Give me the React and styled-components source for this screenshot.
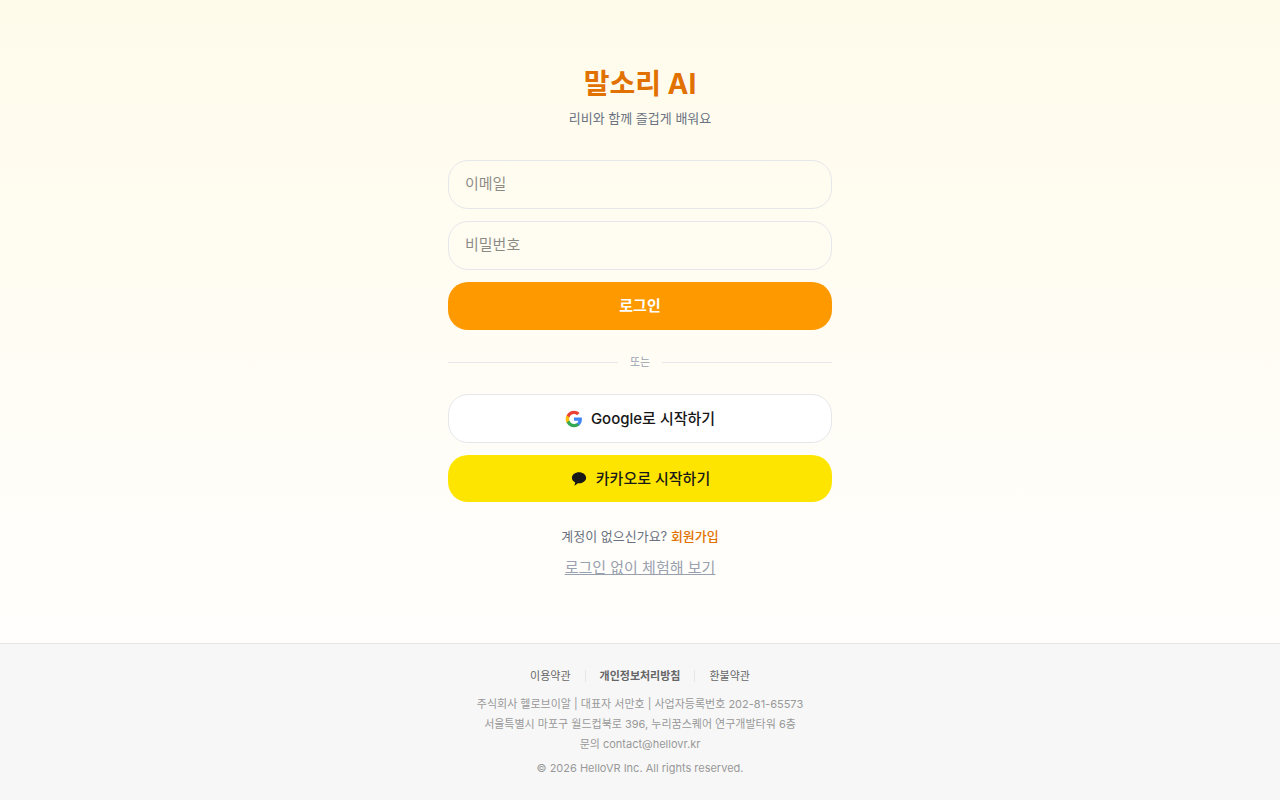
import React from "react";
import styled, { createGlobalStyle } from "styled-components";

const GlobalStyle = createGlobalStyle`
  * { box-sizing: border-box; }
  body {
    margin: 0;
    font-family: Inter, "Noto Sans CJK KR", sans-serif;
    font-size: 15px;
    line-height: 24px;
    color: #171717;
    background: #fffefa;
  }
  button, input { font: inherit; color: inherit; }
  h1, p { margin: 0; }
`;

const Page = styled.div`
  min-height: 100vh;
  display: flex;
  flex-direction: column;
`;

const Main = styled.main`
  flex: 1;
  display: flex;
  flex-direction: column;
  align-items: center;
  padding: 60px 24px;
  background: linear-gradient(to bottom, #fffbeb, #fffefc);
`;

const Panel = styled.div`
  width: 100%;
  max-width: 384px;
`;

const Header = styled.header`
  text-align: center;
  margin-bottom: 32px;
`;

const Title = styled.h1`
  font-size: 28px;
  line-height: 48px;
  font-weight: 700;
  color: #e17100;
`;

const Subtitle = styled.p`
  font-size: 13px;
  line-height: 20px;
  color: #6a7282;
`;

const Stack = styled.form`
  display: flex;
  flex-direction: column;
  gap: 12px;
`;

const Field = styled.input`
  width: 100%;
  height: 49px;
  padding: 0 16px 2px;
  border: 1px solid #e5e7eb;
  border-radius: 20px;
  background: transparent;
  &::placeholder { color: #171717; opacity: 0.5; }
`;

const tones = {
  primary: "height: 48px; border: 0; background: #fe9a00; color: #fff; font-weight: 700;",
  google: "height: 49px; border: 1px solid #e5e7eb; background: #fff; color: #171717;",
  kakao: "height: 47px; border: 0; background: #fee500; color: #191919;",
};

const Button = styled.button`
  display: flex;
  align-items: center;
  justify-content: center;
  gap: 8px;
  width: 100%;
  padding: 0 16px;
  border-radius: 20px;
  font-weight: 500;
  cursor: pointer;
  ${({ $tone }) => tones[$tone]}
`;

const Divider = styled.div`
  display: flex;
  align-items: center;
  gap: 12px;
  margin: 24px 0;
  font-size: 11px;
  line-height: 16px;
  color: #99a1af;
  &::before, &::after {
    content: "";
    flex: 1;
    height: 1px;
    background: #e5e7eb;
  }
`;

const Signup = styled.p`
  margin-top: 24px;
  text-align: center;
  font-size: 13px;
  line-height: 20px;
  color: #6a7282;
`;

const SignupLink = styled.a`
  font-weight: 500;
  color: #e17100;
  text-decoration: none;
`;

const Trial = styled.p`
  margin-top: 10px;
  text-align: center;
`;

const TrialLink = styled.a`
  color: #99a1af;
`;

const Footer = styled.footer`
  padding: 22px 24px;
  border-top: 1px solid #e5e5e5;
  background: #f7f7f7;
  text-align: center;
  font-size: 11px;
  line-height: 20px;
  color: #999;
`;

const Policies = styled.nav`
  display: flex;
  align-items: center;
  justify-content: center;
  gap: 14px;
  margin-bottom: 8px;
`;

const PolicyLink = styled.a`
  color: #666;
  font-weight: ${({ $strong }) => ($strong ? 700 : 400)};
  text-decoration: none;
`;

const Separator = styled.span`
  width: 1px;
  height: 12px;
  background: #e5e5e5;
`;

const Copyright = styled.p`
  margin-top: 4px;
`;

const GoogleIcon = () => (
  <svg width="18" height="18" viewBox="0 0 24 24" aria-hidden="true">
    <path fill="#4285F4" d="M22.56 12.25c0-.78-.07-1.53-.2-2.25H12v4.26h5.92a5.06 5.06 0 0 1-2.2 3.32v2.77h3.57c2.08-1.92 3.27-4.74 3.27-8.1z" />
    <path fill="#34A853" d="M12 23c2.97 0 5.46-.98 7.28-2.66l-3.57-2.77c-.98.66-2.23 1.06-3.71 1.06-2.86 0-5.29-1.93-6.16-4.53H2.18v2.84C3.99 20.53 7.7 23 12 23z" />
    <path fill="#FBBC05" d="M5.84 14.09a6.6 6.6 0 0 1 0-4.18V7.07H2.18a11 11 0 0 0 0 9.86l3.66-2.84z" />
    <path fill="#EA4335" d="M12 5.38c1.62 0 3.06.56 4.21 1.64l3.15-3.15C17.45 2.09 14.97 1 12 1 7.7 1 3.99 3.47 2.18 7.07l3.66 2.84c.87-2.6 3.3-4.53 6.16-4.53z" />
  </svg>
);

const KakaoIcon = () => (
  <svg width="18" height="18" viewBox="0 0 24 24" aria-hidden="true">
    <path fill="#191919" d="M12 3C6.75 3 2.5 6.3 2.5 10.4c0 2.65 1.78 4.97 4.45 6.28l-.95 3.5c-.08.3.26.54.52.37l4.15-2.8c.44.05.88.07 1.33.07 5.25 0 9.5-3.3 9.5-7.42C21.5 6.3 17.25 3 12 3z" />
  </svg>
);

export default function App() {
  return (
    <Page lang="ko">
      <GlobalStyle />
      <Main>
        <Panel>
          <Header>
            <Title>말소리 AI</Title>
            <Subtitle>리비와 함께 즐겁게 배워요</Subtitle>
          </Header>
          <Stack onSubmit={(e) => e.preventDefault()}>
            <Field type="email" placeholder="이메일" aria-label="이메일" />
            <Field type="password" placeholder="비밀번호" aria-label="비밀번호" />
            <Button type="submit" $tone="primary">로그인</Button>
          </Stack>
          <Divider>또는</Divider>
          <Stack as="div">
            <Button type="button" $tone="google"><GoogleIcon />Google로 시작하기</Button>
            <Button type="button" $tone="kakao"><KakaoIcon />카카오로 시작하기</Button>
          </Stack>
          <Signup>계정이 없으신가요? <SignupLink href="#signup">회원가입</SignupLink></Signup>
          <Trial><TrialLink href="#trial">로그인 없이 체험해 보기</TrialLink></Trial>
        </Panel>
      </Main>
      <Footer>
        <Policies>
          <PolicyLink href="#terms">이용약관</PolicyLink>
          <Separator />
          <PolicyLink href="#privacy" $strong>개인정보처리방침</PolicyLink>
          <Separator />
          <PolicyLink href="#refund">환불약관</PolicyLink>
        </Policies>
        <p>주식회사 헬로브이알 | 대표자 서만호 | 사업자등록번호 202-81-65573</p>
        <p>서울특별시 마포구 월드컵북로 396, 누리꿈스퀘어 연구개발타워 6층</p>
        <p>문의 contact@hellovr.kr</p>
        <Copyright>© 2026 HelloVR Inc. All rights reserved.</Copyright>
      </Footer>
    </Page>
  );
}
